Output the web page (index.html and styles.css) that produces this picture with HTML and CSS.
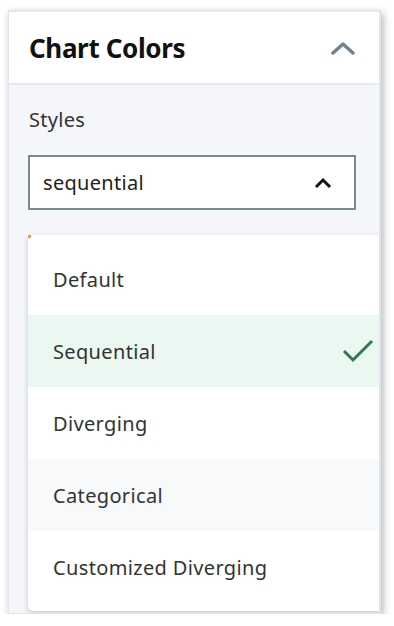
FILE: index.html
```html
<!DOCTYPE html>
<html lang="en">
<head>
  <meta charset="UTF-8">
  <title>Chart Colors</title>
  <link rel="stylesheet" href="styles.css">
</head>
<body>

<!-- Chart colors panel -->
<div class="card">
  <div class="card-header">
    <h2>Chart Colors</h2>
    <svg class="collapse-icon" width="24" height="14" viewBox="0 0 24 14">
      <polyline points="2,12 12,3 22,12" fill="none" stroke="#6d8492" stroke-width="3.5" stroke-linecap="round" stroke-linejoin="round"/>
    </svg>
  </div>

  <div class="card-body">
    <label class="field-label">Styles</label>
    <div class="select-box">
      <span>sequential</span>
      <svg width="18" height="12" viewBox="0 0 18 12">
        <polyline points="2,10 9,3 16,10" fill="none" stroke="#111" stroke-width="3"/>
      </svg>
    </div>
  </div>

  <!-- open menu -->
  <ul class="menu">
    <li>Default</li>
    <li class="selected">Sequential
      <svg width="32" height="24" viewBox="0 0 32 24">
        <polyline points="2,12 11,21 30,2" fill="none" stroke="#2a7b5c" stroke-width="3"/>
      </svg>
    </li>
    <li>Diverging</li>
    <li class="hover">Categorical</li>
    <li>Customized Diverging</li>
  </ul>
</div>

</body>
</html>
```

FILE: styles.css
```css
* { box-sizing: border-box; }
body {
  margin: 0;
  font-family: "Noto Sans", "Open Sans", sans-serif;
  color: #333;
  background: #fff;
}

.card {
  position: relative;
  width: 373px;
  height: 604px;
  margin: 10px 0 0 8px;
  border: 1px solid #dfe5ec;
  border-right-width: 2px;
  background: #f4f6fa;
  overflow: hidden;
  box-shadow: 2px 3px 8px rgba(0, 0, 0, 0.3);
}

.card-header {
  height: 74px;
  padding: 0 24px 0 20px;
  display: flex;
  align-items: center;
  justify-content: space-between;
  background: #fff;
  border-top: 1px solid #e4ebf2;
  border-bottom: 2px solid #e6ebf1;
}

.card-header h2 {
  margin: 0;
  font-size: 26px;
  font-weight: bold;
  color: #111;
  letter-spacing: -0.35px;
}

.card-body {
  padding: 22px 20px 22px 19px;
}

.field-label {
  display: block;
  padding-left: 1px;
  font-size: 20px;
  line-height: 26px;
  color: #333;
  letter-spacing: 0.3px;
}

.select-box {
  margin-top: 22px;
  width: 328px;
  height: 55px;
  padding: 0 22px 0 13px;
  display: flex;
  align-items: center;
  justify-content: space-between;
  background: #fff;
  border: 2px solid #7b8b96;
  font-size: 20px;
  color: #222;
  letter-spacing: 0.3px;
}

.menu {
  position: absolute;
  top: 224px;
  left: 19px;
  right: -12px;
  margin: 0;
  padding: 8px 0;
  list-style: none;
  background: #fff;
  border-radius: 6px;
  border-top-left-radius: 0;
  box-shadow: 0 2px 6px rgba(0, 0, 0, 0.18);
}

.menu::before {
  content: "";
  position: absolute;
  top: 0;
  left: 0;
  width: 3px;
  height: 3px;
  background: #f0a030;
}

.menu li {
  height: 72px;
  padding: 0 24px 0 25px;
  display: flex;
  align-items: center;
  justify-content: space-between;
  font-size: 20px;
  color: #333;
  letter-spacing: 0.35px;
}

.menu li.selected { background: #eaf8f1; }
.menu li.hover { background: #f7f9fa; }
.menu li svg { margin-right: -7px; }
```
